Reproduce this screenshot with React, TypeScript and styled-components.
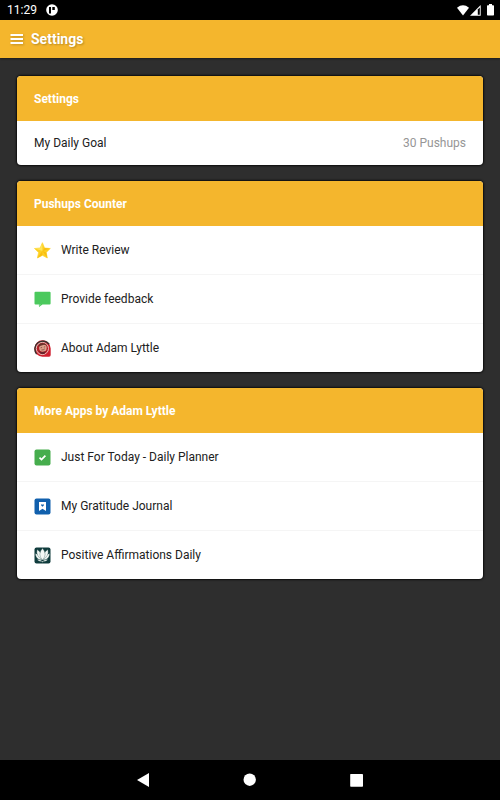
import React from "react";
import styled, { createGlobalStyle } from "styled-components";

const GlobalStyle = createGlobalStyle`
  *, *::before, *::after { box-sizing: border-box; }
  body {
    margin: 0;
    background: #2e2e2e;
    font-family: Roboto, "Liberation Sans", sans-serif;
    font-size: 12px;
    color: #212121;
  }
  button { font: inherit; color: inherit; }
`;

const Screen = styled.div`
  display: flex;
  flex-direction: column;
  min-height: 100vh;
`;

const StatusBar = styled.div`
  display: flex;
  align-items: center;
  justify-content: space-between;
  height: 20px;
  padding: 0 5px 0 7px;
  background: #000;
  color: #fff;
`;

const StatusGroup = styled.div<{ $gap: number }>`
  display: flex;
  align-items: center;
  gap: ${({ $gap }) => $gap}px;
  svg { display: block; }
`;

const Battery = styled.svg`
  margin-left: 4px;
`;

const AppBar = styled.header`
  display: flex;
  align-items: center;
  gap: 7px;
  height: 38px;
  padding: 0 10px;
  background: #f4b62d;
  color: #fff;
  box-shadow: 0 1px 2px rgba(0, 0, 0, 0.4);
`;

const MenuButton = styled.button`
  display: flex;
  padding: 0;
  border: 0;
  background: none;
  cursor: pointer;
  svg { filter: drop-shadow(1px 1px 1px rgba(0, 0, 0, 0.2)); }
`;

const PageTitle = styled.h1`
  margin: 0;
  font-size: 14px;
  font-weight: 700;
  text-shadow: 1px 1px 2px rgba(0, 0, 0, 0.25);
`;

const Content = styled.main`
  display: flex;
  flex: 1;
  flex-direction: column;
  gap: 16px;
  padding: 18px 17px;
`;

const Card = styled.section`
  overflow: hidden;
  border-radius: 4px;
  background: #fff;
  box-shadow: 0 0 2px 1px rgba(0, 0, 0, 0.75);
`;

const CardTitle = styled.h2`
  display: flex;
  align-items: center;
  height: 45px;
  margin: 0;
  padding: 0 17px;
  background: #f4b62d;
  color: #fff;
  font-size: 12px;
  font-weight: 700;
`;

const List = styled.ul`
  margin: 0;
  padding: 0;
  list-style: none;
`;

const Item = styled.li`
  & + & { border-top: 1px solid #f5f5f5; }
`;

const Row = styled.button<{ $compact?: boolean }>`
  display: flex;
  align-items: center;
  gap: 10px;
  width: 100%;
  height: ${({ $compact }) => ($compact ? 44 : 48)}px;
  padding: 0 17px;
  border: 0;
  background: none;
  text-align: left;
  cursor: pointer;
  svg { flex: none; }
`;

const Label = styled.span`
  flex: 1;
`;

const Value = styled.span`
  color: #969696;
`;

const NavBar = styled.nav`
  display: flex;
  align-items: center;
  justify-content: center;
  gap: 91px;
  height: 40px;
  background: #000;
`;

const NavButton = styled.button`
  display: flex;
  padding: 0;
  border: 0;
  background: none;
  cursor: pointer;
`;

const StarIcon = () => (
  <svg width="17" height="17" viewBox="0 0 17 17" aria-hidden="true">
    <path d="M8.4 .7 10.6 6 16.3 6.5 12.2 10.4 13.3 16 8.4 13.3 3.4 16 4.6 10.4 .5 6.5 6.2 6Z" fill="#fdcf22" stroke="#fdd42e" strokeWidth=".7" strokeLinejoin="round" />
    <path d="M8.4 1 8.4 9 6.2 6ZM.7 6.5 8.4 9 6.2 6Z" fill="#fee458" />
    <path d="M8.4 9 12.2 10.4 13.3 16ZM8.4 9 8.4 13.3 3.4 16ZM8.4 9 16 6.6 10.6 6Z" fill="#f8bd12" />
  </svg>
);

const FeedbackIcon = () => (
  <svg width="17" height="17" viewBox="0 0 17 17" aria-hidden="true">
    <path d="M1.5 .8H15.6Q16.6 .8 16.6 1.8V12.4Q16.6 13.4 15.6 13.4H8.5L5 16V13.4H1.5Q.5 13.4 .5 12.4V1.8Q.5 .8 1.5 .8Z" fill="#4bc95d" />
    <path d="M4.8 13.4H7.2L4.8 15.2Z" fill="#8cda96" />
  </svg>
);

const PortraitIcon = () => (
  <svg width="17" height="17" viewBox="0 0 17 17" aria-hidden="true">
    <path d="M8.5 .3A8.2 8.2 0 0 1 16.7 8.5V15Q16.7 16.7 15 16.7H8.5A8.2 8.2 0 0 1 8.5 .3Z" fill="#cf1f2e" />
    <path d="M2.6 14.1A7.9 7.9 0 0 1 15.2 4.3" fill="none" stroke="#37302d" strokeWidth="1.4" />
    <circle cx="8.4" cy="8.5" r="6.1" fill="#b51f28" stroke="#ead0c7" strokeWidth=".9" />
    <ellipse cx="8.9" cy="7.8" rx="3.8" ry="3.9" fill="#dda08b" />
    <path d="M4.5 7.2Q4.6 3.4 8 3.2Q11.8 2.9 12.8 5.5L10 4.7 6 6Z" fill="#6b322b" />
    <path d="M6.6 7.8 8.1 7.5M9.8 7.1 11.2 6.8M7.4 10Q9.4 10.2 10.8 8.9" stroke="#70362f" strokeWidth=".7" fill="none" />
    <path d="M4.6 10.8Q7 13 11.8 11.3L10.3 14H7Z" fill="#67242a" />
  </svg>
);

const PlannerIcon = () => (
  <svg width="17" height="17" viewBox="0 0 17 17" aria-hidden="true">
    <rect x=".5" y=".5" width="16" height="16" rx="2" fill="#46ad4d" />
    <path d="m5.5 8.7 2 1.9 3.9-4" fill="none" stroke="#fff" strokeWidth="1.7" />
  </svg>
);

const JournalIcon = () => (
  <svg width="17" height="17" viewBox="0 0 17 17" aria-hidden="true">
    <rect x=".5" y=".5" width="16" height="16" rx="2" fill="#1160ad" />
    <path d="M5 4H12V13L8.5 10.8 5 13Z" fill="#fff" />
    <path d="M8.5 8.8 7.2 7.5Q6.8 6.4 7.6 6.2 8.2 6.1 8.5 6.7 8.8 6.1 9.4 6.2 10.2 6.4 9.8 7.5Z" fill="#1160ad" />
  </svg>
);

const LotusIcon = () => (
  <svg width="17" height="17" viewBox="0 0 17 17" aria-hidden="true">
    <rect x=".5" y=".5" width="16" height="16" rx="2" fill="#103c3d" />
    <g fill="#f3f8f5" stroke="#103c3d" strokeWidth=".3">
      <path d="M8.5 13Q2 13.4 1.2 6.4 6 7.3 8.5 13ZM8.5 13Q15 13.4 15.8 6.4 11 7.3 8.5 13Z" />
      <path d="M8.5 13Q1.6 9 3 2.6 8.2 5.2 8.5 13ZM8.5 13Q15.4 9 14 2.6 8.8 5.2 8.5 13Z" />
      <path d="M8.5 13.2Q3.2 7 8.5 1.3Q13.8 7 8.5 13.2Z" />
      <path d="M3 12.6Q6 12 8.5 14.2 11 12 14 12.6 12.4 14.8 9.3 14.5L8.5 15.6 7.7 14.5Q4.6 14.8 3 12.6Z" />
    </g>
  </svg>
);

const sections = [
  {
    title: "Pushups Counter",
    items: [
      { label: "Write Review", Icon: StarIcon },
      { label: "Provide feedback", Icon: FeedbackIcon },
      { label: "About Adam Lyttle", Icon: PortraitIcon },
    ],
  },
  {
    title: "More Apps by Adam Lyttle",
    items: [
      { label: "Just For Today - Daily Planner", Icon: PlannerIcon },
      { label: "My Gratitude Journal", Icon: JournalIcon },
      { label: "Positive Affirmations Daily", Icon: LotusIcon },
    ],
  },
];

export default function App() {
  return (
    <Screen>
      <GlobalStyle />
      <StatusBar>
        <StatusGroup $gap={9}>
          <time>11:29</time>
          <svg width="12" height="12" viewBox="0 0 12 12" aria-hidden="true">
            <circle cx="6" cy="6" r="5.8" fill="#fff" />
            <path d="M3 3H5V9.5H3ZM6.3 3H8.8V6H6.3Z" fill="#000" />
          </svg>
        </StatusGroup>
        <StatusGroup $gap={1}>
          <svg width="12" height="11" viewBox="0 0 12 11" aria-hidden="true">
            <path d="M0 2.7Q6-2 12 2.7L6 10.5Z" fill="#fff" />
          </svg>
          <svg width="12" height="11" viewBox="0 0 12 11" aria-hidden="true">
            <path d="M0 10.7 10.7 0V10.7Z" fill="#fff" />
            <path d="M7.8 4.4 9.8 2.4V9.8H7.8Z" fill="#000" />
          </svg>
          <Battery width="8" height="12" viewBox="0 0 8 12" aria-hidden="true">
            <path d="M2 0H5V1.3H6.3Q7 1.3 7 2V10.8Q7 11.5 6.3 11.5H.7Q0 11.5 0 10.8V2Q0 1.3 .7 1.3H2Z" fill="#fff" />
          </Battery>
        </StatusGroup>
      </StatusBar>
      <AppBar>
        <MenuButton aria-label="Open menu">
          <svg width="14" height="12" viewBox="0 0 14 12" aria-hidden="true">
            <path d="M.5 2H13M.5 6H13M.5 10H13" stroke="#fff" strokeWidth="2" />
          </svg>
        </MenuButton>
        <PageTitle>Settings</PageTitle>
      </AppBar>
      <Content>
        <Card>
          <CardTitle>Settings</CardTitle>
          <Row $compact>
            <Label>My Daily Goal</Label>
            <Value>30 Pushups</Value>
          </Row>
        </Card>
        {sections.map(({ title, items }) => (
          <Card key={title}>
            <CardTitle>{title}</CardTitle>
            <List>
              {items.map(({ label, Icon }) => (
                <Item key={label}>
                  <Row>
                    <Icon />
                    <Label>{label}</Label>
                  </Row>
                </Item>
              ))}
            </List>
          </Card>
        ))}
      </Content>
      <NavBar aria-label="System">
        <NavButton aria-label="Back">
          <svg width="16" height="16" viewBox="0 0 16 16" aria-hidden="true">
            <path d="M2 8 14 1V15Z" fill="#fff" />
          </svg>
        </NavButton>
        <NavButton aria-label="Home">
          <svg width="16" height="16" viewBox="0 0 16 16" aria-hidden="true">
            <circle cx="7.7" cy="7.7" r="6.2" fill="#fff" />
          </svg>
        </NavButton>
        <NavButton aria-label="Recent apps">
          <svg width="16" height="16" viewBox="0 0 16 16" aria-hidden="true">
            <rect x="1.2" y="1.9" width="12.8" height="12.8" rx=".7" fill="#fff" />
          </svg>
        </NavButton>
      </NavBar>
    </Screen>
  );
}
